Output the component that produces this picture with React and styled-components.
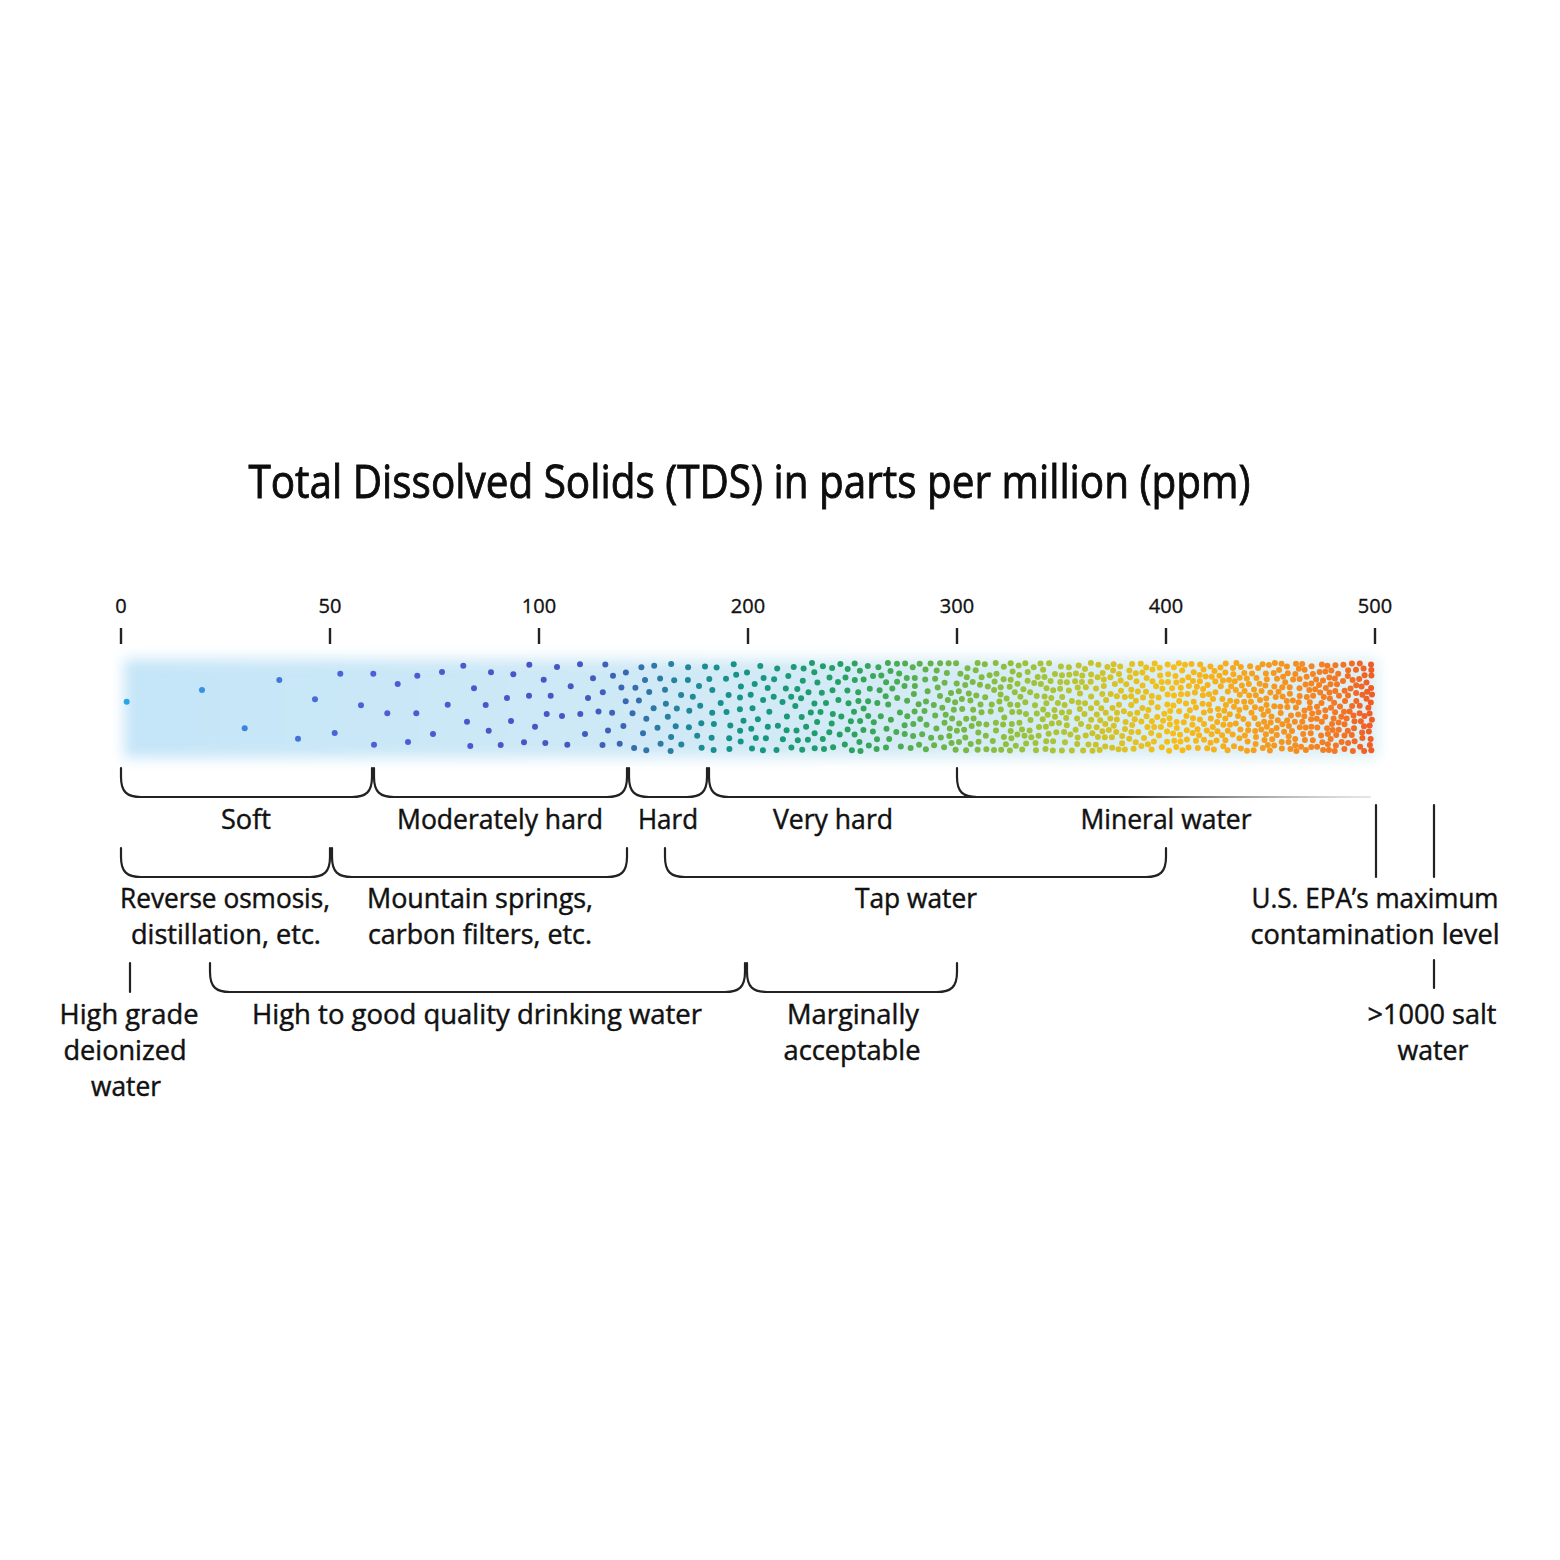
import React, { useMemo, useRef, useState, useLayoutEffect } from 'react';
import styled, { createGlobalStyle } from 'styled-components';

const Global = createGlobalStyle`
  html, body { margin: 0; padding: 0; background: #ffffff; }
  body { font-family: "Open Sans", "Noto Sans", sans-serif; color: #111; }
`;

const Page = styled.main`
  width: 1560px;
  height: 1560px;
  box-sizing: border-box;
  display: flex;
  flex-direction: column;
  align-items: center;
  padding-top: 449px;
  background: #ffffff;
`;

const Title = styled.h1`
  margin: 0 62px 0 0;
  font-family: "Open Sans", "Noto Sans", sans-serif;
  font-weight: 400;
  font-size: 46px;
  line-height: 62px;
  color: #0d0d0d;
  -webkit-text-stroke: 0.9px #0d0d0d;
  white-space: nowrap;
  transform-origin: center center;
`;

const Chart = styled.svg`
  display: block;
  margin-top: 69px;
  width: 1560px;
  height: 540px;
  overflow: visible;
`;

const TickLabel = styled.text`
  font-family: "Open Sans", "Noto Sans", sans-serif;
  font-size: 20px;
  fill: #111;
  stroke: #111;
  stroke-width: 0.35;
  text-anchor: middle;
`;

const Label = styled.text`
  font-family: "Open Sans", "Noto Sans", sans-serif;
  font-size: 27px;
  fill: #111;
  stroke: #111;
  stroke-width: 0.45;
  text-anchor: middle;
`;

const Stroke = styled.path`
  fill: none;
  stroke: ${(p) => p.$paint || '#222'};
  stroke-width: 2.2;
  stroke-linecap: round;
`;

const Tick = styled.line`
  stroke: #222;
  stroke-width: 2.4;
`;

const Dot = styled.circle``;

/* ---------- data ---------- */

const TICKS = [
  { v: '0', x: 121 },
  { v: '50', x: 330 },
  { v: '100', x: 539 },
  { v: '200', x: 748 },
  { v: '300', x: 957 },
  { v: '400', x: 1166 },
  { v: '500', x: 1375 },
];

const B1 = { top: 768, bot: 797 };
const B2 = { top: 848, bot: 877 };
const B3 = { top: 963, bot: 992 };

const BRACKETS = [
  { x1: 121, x2: 372, ...B1 },
  { x1: 374, x2: 627, ...B1 },
  { x1: 629, x2: 707, ...B1 },
  { x1: 709, x2: 975, ...B1, open: true },
  { x1: 121, x2: 330, ...B2 },
  { x1: 332, x2: 627, ...B2 },
  { x1: 665, x2: 1166, ...B2 },
  { x1: 210, x2: 745, ...B3 },
  { x1: 747, x2: 957, ...B3 },
];

const LINES = [
  'M1376 805 L1376 877',
  'M1434 805 L1434 877',
  'M1434 960 L1434 988',
  'M130 963 L130 992',
];

const LABELS = [
  { t: 'Soft', x: 246, y: 829, w: 50 },
  { t: 'Moderately hard', x: 500, y: 829, w: 206 },
  { t: 'Hard', x: 668, y: 829, w: 60 },
  { t: 'Very hard', x: 833, y: 829, w: 120 },
  { t: 'Mineral water', x: 1166, y: 829, w: 171 },
  { t: 'Reverse osmosis,', x: 225, y: 908, w: 210 },
  { t: 'distillation, etc.', x: 226, y: 944, w: 190 },
  { t: 'Mountain springs,', x: 480, y: 908, w: 226 },
  { t: 'carbon filters, etc.', x: 480, y: 944, w: 224 },
  { t: 'Tap water', x: 916, y: 908, w: 122 },
  { t: 'U.S. EPA’s maximum', x: 1375, y: 908, w: 247 },
  { t: 'contamination level', x: 1375, y: 944, w: 249 },
  { t: 'High grade', x: 129, y: 1024, w: 139 },
  { t: 'deionized', x: 125, y: 1060, w: 123 },
  { t: 'water', x: 126, y: 1096, w: 70 },
  { t: 'High to good quality drinking water', x: 477, y: 1024, w: 450 },
  { t: 'Marginally', x: 853, y: 1024, w: 132 },
  { t: 'acceptable', x: 852, y: 1060, w: 137 },
  { t: '>1000 salt', x: 1432, y: 1024, w: 129 },
  { t: 'water', x: 1433, y: 1060, w: 71 },
];

const SEED = [
  [126.7, 701.7], [202, 690], [279.3, 680], [244.7, 728.3], [298, 738.7], [315, 699.3],
  [334.7, 733], [340.3, 673.7], [373.3, 673.7], [361, 705.3], [374, 744.7], [397.7, 684],
  [387.3, 713.3], [417.3, 675.7], [416.3, 713.3], [408, 742], [442, 672], [447.7, 704.7],
  [433, 734], [463.3, 665.7], [474, 688.3], [467, 721.7], [470.3, 746], [485.7, 705],
  [491, 672.3], [488.7, 730.7], [500.7, 745], [507, 698], [511, 721], [513.3, 674.3],
  [529.3, 664.7], [529, 695.7], [524, 742.3], [535, 726.7], [543.7, 679.7], [550.7, 695.7],
  [546.7, 714], [545.3, 743], [557, 667], [562, 716], [567.3, 744.7], [570.7, 686.3],
  [580, 664.3], [580.3, 714], [588, 698], [585, 734], [593, 678.3],
];

const COLOR_STOPS = [
  [127, '#2ba5e5'], [200, '#3592e2'], [280, '#4078dc'], [340, '#4a64d7'], [420, '#4d5ad2'],
  [520, '#4855c8'], [580, '#4358c2'], [620, '#3b64b4'], [660, '#2b7ca4'], [700, '#1b8c94'],
  [740, '#169488'], [790, '#1a9a76'], [840, '#25a064'], [890, '#45aa55'], [940, '#6ab54a'],
  [1000, '#8dbe40'], [1060, '#b0c436'], [1120, '#dbc226'], [1170, '#f5bf1a'], [1230, '#f6ab1c'],
  [1290, '#f59120'], [1340, '#f37624'], [1375, '#ef5a25'],
];

const SPACING = [
  [590, 13], [640, 12.2], [750, 10.2], [850, 8.6], [960, 7.3], [1060, 6.6],
  [1170, 6.1], [1270, 5.8], [1375, 5.5],
];

function lerpTable(table, x) {
  if (x <= table[0][0]) return table[0][1];
  for (let i = 1; i < table.length; i++) {
    if (x <= table[i][0]) {
      const [x0, v0] = table[i - 1];
      const [x1, v1] = table[i];
      return v0 + ((v1 - v0) * (x - x0)) / (x1 - x0);
    }
  }
  return table[table.length - 1][1];
}

function hex(h) {
  return [1, 3, 5].map((i) => parseInt(h.slice(i, i + 2), 16));
}

function colorAt(x) {
  const s = COLOR_STOPS;
  if (x <= s[0][0]) return s[0][1];
  for (let i = 1; i < s.length; i++) {
    if (x <= s[i][0]) {
      const t = (x - s[i - 1][0]) / (s[i][0] - s[i - 1][0]);
      const a = hex(s[i - 1][1]);
      const b = hex(s[i][1]);
      const c = a.map((v, k) => Math.round(v + (b[k] - v) * t));
      return `rgb(${c[0]},${c[1]},${c[2]})`;
    }
  }
  return s[s.length - 1][1];
}

function mulberry32(a) {
  return function () {
    a |= 0;
    a = (a + 0x6d2b79f5) | 0;
    let t = Math.imul(a ^ (a >>> 15), 1 | a);
    t = (t + Math.imul(t ^ (t >>> 7), 61 | t)) ^ t;
    return ((t ^ (t >>> 14)) >>> 0) / 4294967296;
  };
}

function makeDots() {
  const rand = mulberry32(20240611);
  const pts = [];
  const buckets = new Map();
  const BW = 8;
  const add = (p) => {
    const k = Math.floor(p.x / BW);
    if (!buckets.has(k)) buckets.set(k, []);
    buckets.get(k).push(p);
    pts.push(p);
  };
  SEED.forEach(([x, y]) => add({ x, y, r: 13 }));
  const X0 = 598, X1 = 1372, Y0 = 663, Y1 = 751;
  for (let i = 0; i < 200000; i++) {
    const x = X0 + rand() * (X1 - X0);
    const y = Y0 + rand() * (Y1 - Y0);
    const r = lerpTable(SPACING, x);
    const k0 = Math.floor((x - 14) / BW);
    const k1 = Math.floor((x + 14) / BW);
    let ok = true;
    for (let k = k0; k <= k1 && ok; k++) {
      const b = buckets.get(k);
      if (!b) continue;
      for (let j = 0; j < b.length; j++) {
        const p = b[j];
        const rr = Math.max(r, p.r);
        const dx = p.x - x;
        const dy = p.y - y;
        if (dx * dx + dy * dy < rr * rr) { ok = false; break; }
      }
    }
    if (ok) add({ x, y, r });
  }
  return pts.map((p) => ({ x: p.x, y: p.y, c: colorAt(p.x) }));
}

function bracketPath({ x1, x2, top, bot, open }) {
  const left = `M${x1} ${top} L${x1} ${top + 9} C${x1} ${bot - 5} ${x1 + 6} ${bot} ${x1 + 20} ${bot}`;
  if (open) return `${left} L${x2} ${bot}`;
  return `${left} L${x2 - 20} ${bot} C${x2 - 6} ${bot} ${x2} ${bot - 5} ${x2} ${top + 9} L${x2} ${top}`;
}

/* ---------- components ---------- */

function Scale({ dots }) {
  return (
    <Chart viewBox="0 580 1560 540" xmlns="http://www.w3.org/2000/svg">
      <defs>
        <filter id="glow" x="-5%" y="-40%" width="110%" height="180%">
          <feGaussianBlur stdDeviation="7" />
        </filter>
        <linearGradient id="band" x1="120" x2="1380" y1="0" y2="0" gradientUnits="userSpaceOnUse">
          <stop offset="0" stopColor="#c4e5f8" />
          <stop offset="0.45" stopColor="#d0e9f6" />
          <stop offset="1" stopColor="#ddeff4" />
        </linearGradient>
        <linearGradient id="fade" x1="1120" x2="1372" y1="0" y2="0" gradientUnits="userSpaceOnUse">
          <stop offset="0" stopColor="#222" stopOpacity="1" />
          <stop offset="1" stopColor="#bbb" stopOpacity="0.35" />
        </linearGradient>
      </defs>

      {TICKS.map((t) => (
        <g key={t.v}>
          <TickLabel x={t.x} y={613}>{t.v}</TickLabel>
          <Tick x1={t.x} x2={t.x} y1={628} y2={644} />
        </g>
      ))}

      <rect x="124" y="659" width="1254" height="99" fill="url(#band)" filter="url(#glow)" />

      {dots.map((d, i) => (
        <Dot key={i} cx={d.x.toFixed(1)} cy={d.y.toFixed(1)} r={3} fill={d.c} />
      ))}

      {BRACKETS.map((b, i) => (
        <Stroke key={i} d={bracketPath(b)} />
      ))}
      <Stroke d={bracketPath({ x1: 957, x2: 1370, top: 768, bot: 797, open: true })} $paint="url(#fade)" />
      {LINES.map((d) => (
        <Stroke key={d} d={d} />
      ))}

      {LABELS.map((l, i) => (
        <Label key={i} x={l.x} y={l.y} textLength={l.w} lengthAdjust="spacingAndGlyphs">
          {l.t}
        </Label>
      ))}
    </Chart>
  );
}

export default function App() {
  const dots = useMemo(makeDots, []);
  const titleRef = useRef(null);
  const [scale, setScale] = useState(1);

  useLayoutEffect(() => {
    const measure = () => {
      const el = titleRef.current;
      if (el && el.offsetWidth) setScale(1002 / el.offsetWidth);
    };
    measure();
    if (document.fonts && document.fonts.ready) document.fonts.ready.then(measure);
  }, []);

  return (
    <>
      <Global />
      <Page>
        <Title ref={titleRef} style={{ transform: `scaleX(${scale})` }}>
          Total Dissolved Solids (TDS) in parts per million (ppm)
        </Title>
        <Scale dots={dots} />
      </Page>
    </>
  );
}
